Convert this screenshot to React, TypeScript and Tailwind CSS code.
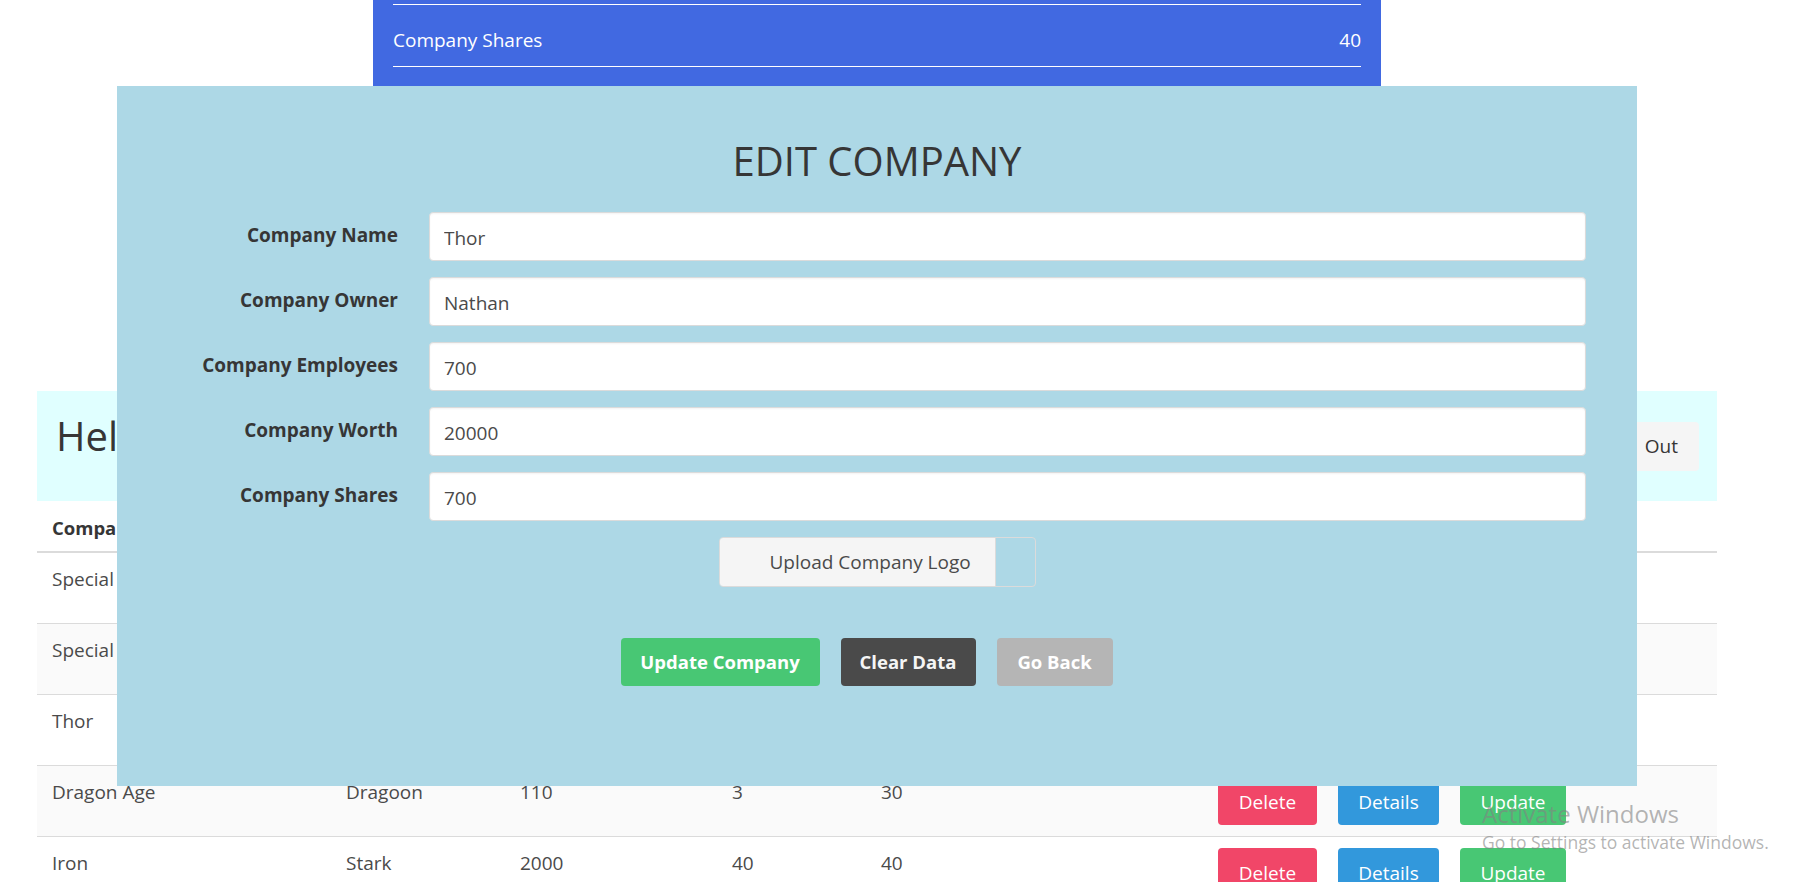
import React from "react";

type Row = {
  name: string;
  owner: string;
  emp: string;
  worth: string;
  shares: string;
  striped: boolean;
};

const rows: Row[] = [
  { name: "Special", owner: "Agent", emp: "500", worth: "10", shares: "10", striped: false },
  { name: "Special", owner: "Forces", emp: "300", worth: "20", shares: "15", striped: true },
  { name: "Thor", owner: "Nathan", emp: "700", worth: "20000", shares: "700", striped: false },
  { name: "Dragon Age", owner: "Dragoon", emp: "110", worth: "3", shares: "30", striped: true },
  { name: "Iron", owner: "Stark", emp: "2000", worth: "40", shares: "40", striped: false },
];

const fields: { label: string; value: string }[] = [
  { label: "Company Name", value: "Thor" },
  { label: "Company Owner", value: "Nathan" },
  { label: "Company Employees", value: "700" },
  { label: "Company Worth", value: "20000" },
  { label: "Company Shares", value: "700" },
];

export default function App() {
  return (
    <div className="relative h-[882px] w-full overflow-hidden bg-white font-['Open_Sans',sans-serif] text-[#4a4a4a]">
      <div className="w-[1754px]">
        {/* Blue details card (background page) */}
        <div className="mx-auto h-[300px] w-[1008px] bg-[#4169e1] px-[20px] pt-[4px] text-white">
          <div className="flex h-[63px] items-center justify-between border-y border-white pt-[9px] text-[19px] leading-[28px]">
            <span>Company Shares</span>
            <span>40</span>
          </div>
        </div>

        {/* Greeting bar */}
        <div className="mx-[37px] mt-[91px] flex h-[110px] items-center justify-between bg-[#e0ffff] pl-[19px] pr-[18px]">
          <h1 className="mb-[21px] text-[40px] leading-[48px] text-[#363636]">Hello, Nathan</h1>
          <button className="flex h-[49px] items-center gap-[9px] rounded-[4px] bg-[#f5f5f5] px-[21px] text-[19px] leading-[28px] text-[#363636]">
            <span>Log</span>
            <span>Out</span>
          </button>
        </div>

        {/* Companies table */}
        <div className="mx-[37px]">
          <div className="grid h-[52px] grid-cols-[294px_174px_212px_149px_337px_1fr] border-b-2 border-[#dbdbdb] text-[18.5px] font-bold leading-[28px] text-[#363636]">
            <div className="pl-[15px] pt-[13px]">Company Name</div>
            <div className="pl-[15px] pt-[13px]">Owner</div>
            <div className="pl-[15px] pt-[13px]">Employees</div>
            <div className="pl-[15px] pt-[13px]">Worth</div>
            <div className="pl-[15px] pt-[13px]">Shares</div>
            <div className="pl-[15px] pt-[13px]">Actions</div>
          </div>
          {rows.map((r, i) => (
            <div
              key={i}
              className={
                "grid h-[71px] grid-cols-[294px_174px_212px_149px_337px_1fr] border-b border-[#dbdbdb] text-[19px] leading-[28px] " +
                (r.striped ? "bg-[#fafafa]" : "bg-white")
              }
            >
              <div className="pl-[15px] pt-[12px]">{r.name}</div>
              <div className="pl-[15px] pt-[12px]">{r.owner}</div>
              <div className="pl-[15px] pt-[12px]">{r.emp}</div>
              <div className="pl-[15px] pt-[12px]">{r.worth}</div>
              <div className="pl-[15px] pt-[12px]">{r.shares}</div>
              <div className="flex gap-[21px] pl-[15px] pt-[11px]">
                <button className="flex h-[48px] w-[99px] items-center justify-center rounded-[4px] bg-[#f14668] pt-[2px] text-white">
                  Delete
                </button>
                <button className="flex h-[48px] w-[101px] items-center justify-center rounded-[4px] bg-[#3298dc] pt-[2px] text-white">
                  Details
                </button>
                <button className="flex h-[48px] w-[106px] items-center justify-center rounded-[4px] bg-[#48c774] pt-[2px] text-white">
                  Update
                </button>
              </div>
            </div>
          ))}
        </div>
      </div>

      {/* Edit company modal */}
      <div className="absolute left-[117px] top-[86px] flex h-[700px] w-[1520px] flex-col bg-[#add8e6] pt-[51px]">
        <h2 className="text-center text-[40px] font-medium leading-[1.2] text-[#363636]">EDIT COMPANY</h2>
        <div className="mt-[27px] flex flex-col gap-[16px] pr-[51px]">
          {fields.map((f) => (
            <div key={f.label} className="flex h-[49px] items-center gap-[31px]">
              <label className="mb-[3px] w-[281px] shrink-0 text-right text-[19px] font-bold leading-[28px] text-[#363636]">
                {f.label}
              </label>
              <input
                readOnly
                value={f.value}
                className="h-[49px] flex-1 rounded-[4px] border border-[#dbdbdb] bg-white px-[14px] pt-[2px] font-['Open_Sans',sans-serif] text-[19px] text-[#4a4a4a] shadow-[inset_0_1px_2px_rgba(10,10,10,0.05)] outline-none"
              />
            </div>
          ))}
        </div>
        <div className="mt-[16px] flex h-[50px] self-center overflow-hidden rounded-[4px] border border-[#dbdbdb]">
          <span className="flex w-[275px] items-center bg-[#f5f5f5] pl-[50px] text-[19px] leading-[28px] text-[#4a4a4a]">
            Upload Company Logo
          </span>
          <span className="w-[40px] border-l border-[#dbdbdb]"></span>
        </div>
        <div className="mt-[51px] flex justify-center">
          <button className="mr-[21px] flex h-[48px] w-[199px] items-center justify-center rounded-[4px] bg-[#48c774] text-[18.5px] font-bold text-white">
            Update Company
          </button>
          <button className="mr-[21px] flex h-[48px] w-[135px] items-center justify-center rounded-[4px] bg-[#4a4a4a] text-[18.5px] font-bold text-[#f5f5f5]">
            Clear Data
          </button>
          <button className="mr-[21px] flex h-[48px] w-[116px] items-center justify-center rounded-[4px] bg-[#b5b5b5] text-[18.5px] font-bold text-white">
            Go Back
          </button>
        </div>
      </div>

      {/* Windows activation watermark */}
      <div className="pointer-events-none absolute left-[1482px] top-[800px] flex flex-col gap-[3px] text-[rgba(130,130,130,0.6)]">
        <span className="text-[24px] leading-[1.2]">Activate Windows</span>
        <span className="text-[17.5px] leading-[1.2]">Go to Settings to activate Windows.</span>
      </div>
    </div>
  );
}
